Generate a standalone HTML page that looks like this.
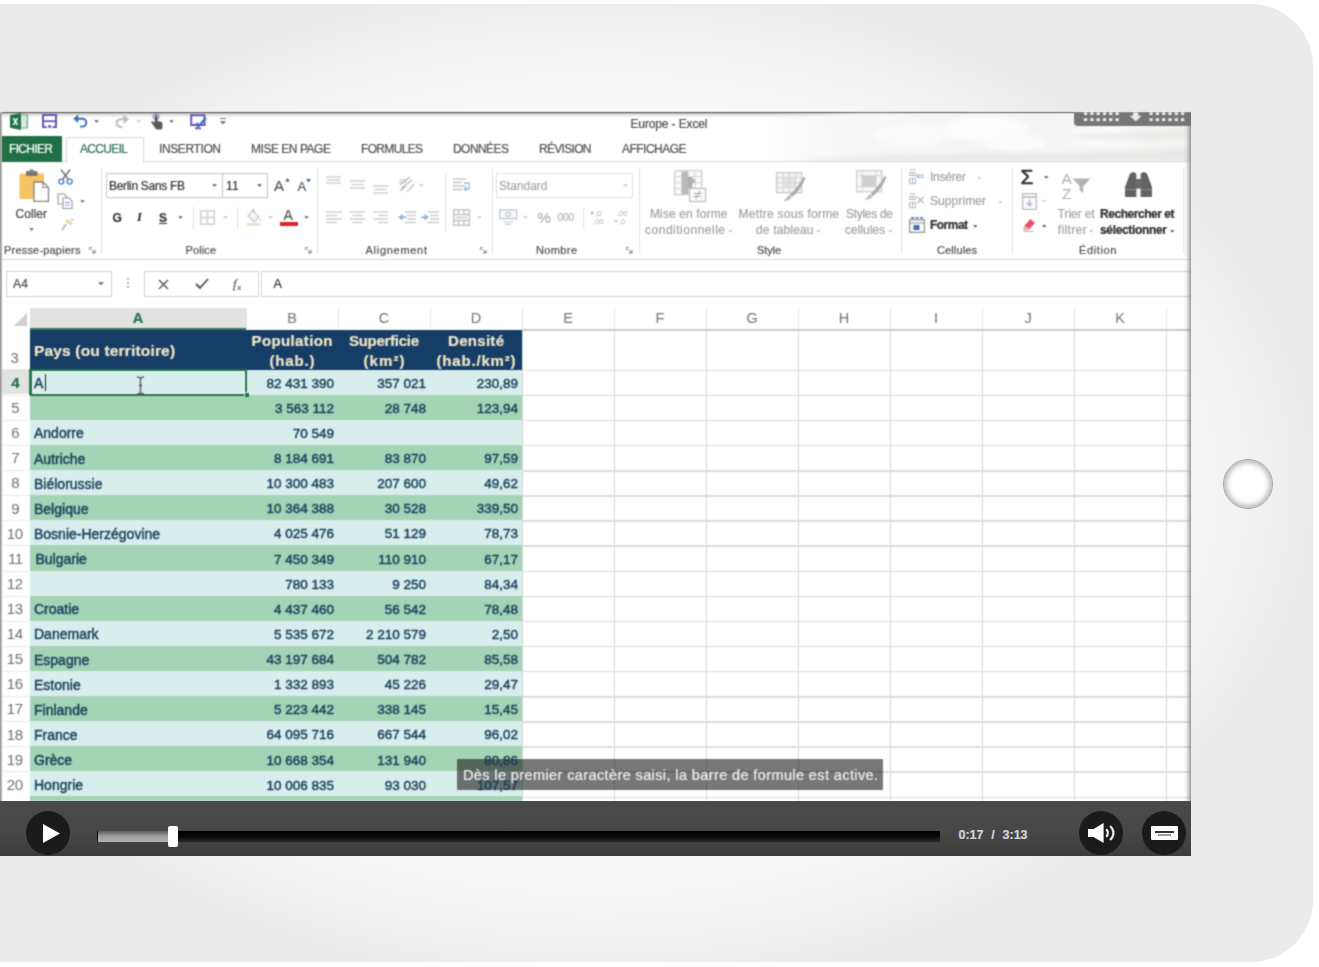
<!DOCTYPE html>
<html lang="fr">
<head>
<meta charset="utf-8">
<title>Europe - Excel</title>
<style>
*{box-sizing:border-box;margin:0;padding:0}
html,body{width:1319px;height:967px;overflow:hidden;background:#fff}
body{position:relative;font-family:"Liberation Sans",sans-serif;}
.abs{position:absolute}
/* tablet frame */
#frame{position:absolute;left:-80px;top:4px;width:1393px;height:957.6px;border-radius:0 62px 62px 0;
 background:
  radial-gradient(ellipse 720px 505px at 680px 480px,#fdfdfd 0%,#fbfbfb 52%,#f8f8f8 75%,#f1f1f1 91%,#ebebeb 100%);}
#home{position:absolute;left:1223px;top:459px;width:50px;height:50px;border-radius:50%;background:#fff;
 border:1px solid #a4a4a4;box-shadow:inset 0 0 6px 1.5px rgba(0,0,0,.36);}
/* video */
#video{position:absolute;left:0;top:111px;width:1191px;height:746px;overflow:hidden}
#excel{position:absolute;left:0;top:0;width:1191px;height:691px;background:#fff;overflow:hidden;color:#555}
#controls{position:absolute;left:0;top:690px;width:1191px;height:55.4px;background:linear-gradient(180deg,#4a4a4a 0%,#474747 55%,#3c3c3c 100%)}
.t{position:absolute;white-space:nowrap;display:block;-webkit-text-stroke:.2px currentColor}
.r{position:absolute;display:block}
#excel svg{overflow:visible}
#excel{filter:url(#soft)}
.c{-webkit-text-stroke:.45px currentColor}
</style>
</head>
<body>
<svg width="0" height="0" style="position:absolute"><defs><filter id="soft" x="0" y="0" width="100%" height="100%" color-interpolation-filters="sRGB"><feConvolveMatrix order="3" kernelMatrix="0.044 0.1216 0.044 0.1216 0.338 0.1216 0.044 0.1216 0.044" divisor="1" edgeMode="duplicate" preserveAlpha="true"/></filter></defs></svg>
<div id="frame"></div>
<div id="home"></div>
<div id="video">
<div id="excel">
<div class="r" style="left:0px;top:1px;width:1191px;height:1px;background:#454545;"></div>
<div class="r" style="left:0px;top:2px;width:1191px;height:4.5px;background:linear-gradient(180deg,rgba(0,0,0,.24),rgba(0,0,0,.08) 50%,rgba(0,0,0,0));"></div>
<svg class="r" style="left:760px;top:2px;" width="431" height="48" viewBox="0 0 431 48"><defs><linearGradient id="cl" x1="0" x2="1"><stop offset="0" stop-color="#f1f1f0" stop-opacity="0"/><stop offset=".3" stop-color="#f4f4f3" stop-opacity=".9"/><stop offset="1" stop-color="#f3f3f2"/></linearGradient><filter id="bl" x="-10%" y="-30%" width="120%" height="160%"><feGaussianBlur stdDeviation="2.2"/></filter></defs>
<rect x="0" y="0" width="431" height="48" fill="url(#cl)"/>
<g filter="url(#bl)"><ellipse cx="150" cy="22" rx="38" ry="12" fill="#fbfbfb"/><ellipse cx="225" cy="16" rx="42" ry="13" fill="#fdfdfd"/><ellipse cx="255" cy="30" rx="30" ry="9" fill="#fcfcfc"/><ellipse cx="345" cy="24" rx="40" ry="10" fill="#f9f9f9"/><ellipse cx="110" cy="8" rx="50" ry="6" fill="#f8f8f8"/>
<path d="M40 48C90 40 150 44 200 41C260 38 330 44 431 34V48Z" fill="#e9e9e7"/><path d="M300 24C340 18 380 22 431 14V24C390 29 340 27 300 24Z" fill="#ebebe9"/></g></svg>
<div class="r" style="left:1074px;top:1px;width:117px;height:14px;background:#767676;border-radius:0 0 0 4px;"></div>
<svg class="r" style="left:1074px;top:1px;" width="117" height="13" viewBox="0 0 117 13"><rect x="10.0" y="0.4" width="3.2" height="2.6" fill="#f4f4f4"/><rect x="10.0" y="6.3" width="3.2" height="2.8" fill="#f4f4f4"/><rect x="16.3" y="0.4" width="3.2" height="2.6" fill="#f4f4f4"/><rect x="16.3" y="6.3" width="3.2" height="2.8" fill="#f4f4f4"/><rect x="22.6" y="0.4" width="3.2" height="2.6" fill="#f4f4f4"/><rect x="22.6" y="6.3" width="3.2" height="2.8" fill="#f4f4f4"/><rect x="28.9" y="0.4" width="3.2" height="2.6" fill="#f4f4f4"/><rect x="28.9" y="6.3" width="3.2" height="2.8" fill="#f4f4f4"/><rect x="35.2" y="0.4" width="3.2" height="2.6" fill="#f4f4f4"/><rect x="35.2" y="6.3" width="3.2" height="2.8" fill="#f4f4f4"/><rect x="41.5" y="0.4" width="3.2" height="2.6" fill="#f4f4f4"/><rect x="41.5" y="6.3" width="3.2" height="2.8" fill="#f4f4f4"/><rect x="75.5" y="0.4" width="3.2" height="2.6" fill="#f4f4f4"/><rect x="75.5" y="6.3" width="3.2" height="2.8" fill="#f4f4f4"/><rect x="81.8" y="0.4" width="3.2" height="2.6" fill="#f4f4f4"/><rect x="81.8" y="6.3" width="3.2" height="2.8" fill="#f4f4f4"/><rect x="88.1" y="0.4" width="3.2" height="2.6" fill="#f4f4f4"/><rect x="88.1" y="6.3" width="3.2" height="2.8" fill="#f4f4f4"/><rect x="94.4" y="0.4" width="3.2" height="2.6" fill="#f4f4f4"/><rect x="94.4" y="6.3" width="3.2" height="2.8" fill="#f4f4f4"/><rect x="100.7" y="0.4" width="3.2" height="2.6" fill="#f4f4f4"/><rect x="100.7" y="6.3" width="3.2" height="2.8" fill="#f4f4f4"/><rect x="107.0" y="0.4" width="3.2" height="2.6" fill="#f4f4f4"/><rect x="107.0" y="6.3" width="3.2" height="2.8" fill="#f4f4f4"/><path d="M59 .5h5.4v3.2h3.4l-6.1 5.6-6.1-5.6h3.4z" fill="#ececec"/></svg>
<span class="t" style="left:630.5px;top:5.5px;font-size:12px;line-height:14px;letter-spacing:-0.13px;color:#4a4a4a;">Europe - Excel</span>
<svg class="r" style="left:10px;top:2px;" width="18" height="17" viewBox="0 0 18 17"><rect x="10.5" y="2" width="6.8" height="13" fill="#c9dad0" stroke="#3d8a62" stroke-width=".8"/><path d="M12.7 2.5V14.5M14.9 2.5V14.5" stroke="#eef4f0" stroke-width="1.1"/><path d="M0 2.2L10.8 0V17L0 14.8Z" fill="#1e7145"/><path d="M2.6 5L4.4 5 5.4 7.2 6.5 5 8.2 5 6.3 8.5 8.3 12 6.5 12 5.4 9.7 4.3 12 2.5 12 4.5 8.5Z" fill="#fff"/></svg>
<svg class="r" style="left:42px;top:3px;" width="15" height="14" viewBox="0 0 15 14"><path d="M1 1H14V13H1Z" fill="#fff" stroke="#6a52b5" stroke-width="2"/><path d="M1 7.2H14" stroke="#6a52b5" stroke-width="1.8"/><rect x="4.2" y="10" width="6.6" height="3.5" fill="#fff"/><rect x="6" y="11.2" width="3" height="2" fill="#6a52b5"/></svg>
<svg class="r" style="left:73px;top:3px;" width="15" height="14" viewBox="0 0 15 14"><path d="M2.5 4.8H9.4A3.9 3.9 0 0 1 9.4 12.6H7" fill="none" stroke="#2f6fbd" stroke-width="1.9"/><path d="M0.3 4.8L5.2 0.6V9Z" fill="#2f6fbd"/></svg>
<svg class="r" style="left:93.5px;top:8.75px;" width="5" height="3.0" viewBox="0 0 10 5"><path d="M0 0H10L5 5Z" fill="#666"/></svg>
<svg class="r" style="left:114px;top:3px;" width="15" height="14" viewBox="0 0 15 14"><path d="M13 5.2H5.8A4 4 0 0 0 5.8 13H8.5" fill="none" stroke="#bdbdbd" stroke-width="2"/><path d="M15 5.2L9.4 0.4V10Z" fill="#bdbdbd"/></svg>
<svg class="r" style="left:135.5px;top:8.75px;" width="5" height="3.0" viewBox="0 0 10 5"><path d="M0 0H10L5 5Z" fill="#c4c4c4"/></svg>
<svg class="r" style="left:150px;top:2px;" width="13" height="17" viewBox="0 0 13 17"><circle cx="6" cy="3.6" r="3" fill="none" stroke="#8a93c9" stroke-width="1.2"/><path d="M4.8 3V9.5L2.8 8.4C1.6 7.9.8 9.2 1.7 10.1L5.6 15.6C6 16.3 6.6 16.6 7.4 16.6H10.2C11.6 16.6 12.4 15.7 12.4 14.3V10.4C12.4 9 11 8.6 9.6 8.4L7.4 8V3C7.4 1.6 4.8 1.6 4.8 3Z" fill="#595959"/></svg>
<svg class="r" style="left:168.5px;top:8.75px;" width="5" height="3.0" viewBox="0 0 10 5"><path d="M0 0H10L5 5Z" fill="#666"/></svg>
<svg class="r" style="left:190px;top:3px;" width="17" height="15" viewBox="0 0 17 15"><path d="M1.2 1.2H14.5V11H1.2Z" fill="#fff" stroke="#6a52b5" stroke-width="2"/><path d="M5 14.4H11M8 11V14" stroke="#6a52b5" stroke-width="1.6"/><path d="M6.5 9L9 11.5L16 4" fill="none" stroke="#2f6fbd" stroke-width="2"/></svg>
<div class="r" style="left:219.5px;top:6.5px;width:6px;height:1.3px;background:#777;"></div>
<svg class="r" style="left:219.5px;top:10.0px;" width="6" height="3.5" viewBox="0 0 10 5"><path d="M0 0H10L5 5Z" fill="#666"/></svg>
<div class="r" style="left:0px;top:50px;width:1191px;height:1px;background:#dadada;"></div>
<div class="r" style="left:0px;top:25px;width:62px;height:26px;background:#1f7044;"></div>
<span class="t" style="left:9.0px;top:31.2px;font-size:12px;line-height:14px;letter-spacing:-0.67px;color:#fff;">FICHIER</span>
<div class="r" style="left:66px;top:26px;width:77.5px;height:25.5px;background:#fff;border:1px solid #d6d6d6;border-bottom:none;"></div>
<span class="t" style="left:80.0px;top:31.2px;font-size:12px;line-height:14px;letter-spacing:-0.67px;color:#2b6f55;">ACCUEIL</span>
<span class="t" style="left:159.0px;top:31.2px;font-size:12px;line-height:14px;letter-spacing:-0.39px;color:#4f4f4f;">INSERTION</span>
<span class="t" style="left:251.0px;top:31.2px;font-size:12px;line-height:14px;letter-spacing:-0.47px;color:#4f4f4f;">MISE EN PAGE</span>
<span class="t" style="left:361.0px;top:31.2px;font-size:12px;line-height:14px;letter-spacing:-0.67px;color:#4f4f4f;">FORMULES</span>
<span class="t" style="left:453.0px;top:31.2px;font-size:12px;line-height:14px;letter-spacing:-0.56px;color:#4f4f4f;">DONNÉES</span>
<span class="t" style="left:539.0px;top:31.2px;font-size:12px;line-height:14px;letter-spacing:-0.69px;color:#4f4f4f;">RÉVISION</span>
<span class="t" style="left:622.0px;top:31.2px;font-size:12px;line-height:14px;letter-spacing:-0.52px;color:#4f4f4f;">AFFICHAGE</span>
<div class="r" style="left:0px;top:148px;width:1191px;height:1px;background:#d9d9d9;"></div>
<div class="r" style="left:101px;top:57px;width:1px;height:86px;background:#e2e2e2;"></div>
<div class="r" style="left:317px;top:57px;width:1px;height:86px;background:#e2e2e2;"></div>
<div class="r" style="left:492px;top:57px;width:1px;height:86px;background:#e2e2e2;"></div>
<div class="r" style="left:638.5px;top:57px;width:1px;height:86px;background:#e2e2e2;"></div>
<div class="r" style="left:901px;top:57px;width:1px;height:86px;background:#e2e2e2;"></div>
<div class="r" style="left:1011.5px;top:57px;width:1px;height:86px;background:#e2e2e2;"></div>
<div class="r" style="left:1182.5px;top:57px;width:1px;height:86px;background:#e2e2e2;"></div>
<div class="r" style="left:445px;top:63px;width:1px;height:58px;background:#e2e2e2;"></div>
<svg class="r" style="left:19px;top:58px;" width="30" height="33" viewBox="0 0 30 33"><rect x=".5" y="4.5" width="24.5" height="25.5" rx="1.2" fill="#f5c264"/><rect x="7" y="2" width="11.5" height="5" rx="1.2" fill="#777"/><rect x="10.5" y=".3" width="4.5" height="3" rx="1.2" fill="#8d8d8d"/><path d="M15 13H24L29.5 18.5V32.3H15Z" fill="#fff" stroke="#858585" stroke-width="1.3"/><path d="M24 13V18.5H29.5" fill="none" stroke="#858585" stroke-width="1.2"/></svg>
<span class="t" style="left:15.5px;top:96.0px;font-size:12px;line-height:14px;letter-spacing:0.03px;color:#444;">Coller</span>
<svg class="r" style="left:28.5px;top:116.75px;" width="5" height="3.0" viewBox="0 0 10 5"><path d="M0 0H10L5 5Z" fill="#666"/></svg>
<svg class="r" style="left:58px;top:58px;" width="15" height="16" viewBox="0 0 15 16"><path d="M3 0.5L10.5 10.5M12 0.5L4.5 10.5" stroke="#6b6b6b" stroke-width="1.3"/><circle cx="3.3" cy="12.6" r="2.5" fill="none" stroke="#4a7fc1" stroke-width="1.4"/><circle cx="11.7" cy="12.6" r="2.5" fill="none" stroke="#4a7fc1" stroke-width="1.4"/></svg>
<svg class="r" style="left:57px;top:82px;" width="16" height="16" viewBox="0 0 16 16"><path d="M1 1H7L10 4V11H1Z" fill="#fff" stroke="#9a9a9a" stroke-width="1.1"/><path d="M6 5H12L15 8V15.5H6Z" fill="#fff" stroke="#9a9a9a" stroke-width="1.1"/><path d="M8 9.5H13M8 12H13" stroke="#7aa0d0" stroke-width="1"/></svg>
<svg class="r" style="left:79.5px;top:88.75px;" width="5" height="3.0" viewBox="0 0 10 5"><path d="M0 0H10L5 5Z" fill="#666"/></svg>
<svg class="r" style="left:59.5px;top:107px;" width="14" height="13" viewBox="0 0 14 13"><path d="M7.5 1L13 5L10.8 7.8L5.3 3.8Z" fill="#ecd6ac"/><path d="M6 6L2 12" stroke="#b9b9b9" stroke-width="1.8"/><path d="M11.5 1l1.6 1.2" stroke="#8ca9d6" stroke-width="1.3"/></svg>
<span class="t" style="left:4.0px;top:133.0px;font-size:11px;line-height:13px;letter-spacing:0.19px;color:#4e4e4e;">Presse-papiers</span>
<svg class="r" style="left:89px;top:135.5px;" width="7" height="7" viewBox="0 0 7 7"><path d="M0.5 3V0.5H3" fill="none" stroke="#8a8a8a" stroke-width="1"/><path d="M2.5 6.5H6.5V2.5Z" fill="#8a8a8a"/><path d="M2 2L5 5" stroke="#8a8a8a" stroke-width="1"/></svg>
<div class="r" style="left:106px;top:62px;width:162px;height:25px;background:#fff;border:1px solid #c6c6c6;"></div>
<div class="r" style="left:221.5px;top:62px;width:1px;height:25px;background:#c6c6c6;"></div>
<span class="t" style="left:109.0px;top:67.5px;font-size:12px;line-height:14px;letter-spacing:-0.31px;color:#333;">Berlin Sans FB</span>
<svg class="r" style="left:211.5px;top:73.25px;" width="5" height="3.0" viewBox="0 0 10 5"><path d="M0 0H10L5 5Z" fill="#555"/></svg>
<span class="t" style="left:226.0px;top:67.5px;font-size:12px;line-height:14px;letter-spacing:0.14px;color:#333;">11</span>
<svg class="r" style="left:256.5px;top:73.25px;" width="5" height="3.0" viewBox="0 0 10 5"><path d="M0 0H10L5 5Z" fill="#555"/></svg>
<span class="t" style="left:274.0px;top:66.0px;font-size:15px;line-height:18px;color:#555;">A</span>
<svg class="r" style="left:284.5px;top:67px;" width="5" height="3.5" viewBox="0 0 5 3.5"><path d="M0 3.5L2.5 0 5 3.5Z" fill="#3d6fb5"/></svg>
<span class="t" style="left:297.5px;top:68.0px;font-size:13px;line-height:16px;color:#555;">A</span>
<svg class="r" style="left:306px;top:67.5px;" width="5" height="3.5" viewBox="0 0 5 3.5"><path d="M0 0L2.5 3.5 5 0Z" fill="#3d6fb5"/></svg>
<span class="t" style="left:112.5px;top:99.5px;font-size:12px;line-height:14px;color:#333;font-weight:bold;">G</span>
<span class="t" style="left:137.0px;top:99.0px;font-size:12.5px;line-height:15px;color:#333;font-weight:bold;font-style:italic;font-family:'Liberation Serif',serif;">I</span>
<span class="t" style="left:159.0px;top:99.5px;font-size:12px;line-height:14px;color:#333;font-weight:bold;text-decoration:underline;">S</span>
<svg class="r" style="left:178.0px;top:105.25px;" width="5" height="3.0" viewBox="0 0 10 5"><path d="M0 0H10L5 5Z" fill="#666"/></svg>
<div class="r" style="left:192.5px;top:96px;width:1px;height:22px;background:#e0e0e0;"></div>
<svg class="r" style="left:200px;top:99px;" width="15" height="15" viewBox="0 0 15 15"><path d="M.75.75H14.25V14.25H.75ZM7.5.75V14.25M.75 7.5H14.25" fill="none" stroke="#cfcfcf" stroke-width="1.5"/></svg>
<svg class="r" style="left:222.5px;top:105.25px;" width="5" height="3.0" viewBox="0 0 10 5"><path d="M0 0H10L5 5Z" fill="#c4c4c4"/></svg>
<div class="r" style="left:237px;top:96px;width:1px;height:22px;background:#e0e0e0;"></div>
<svg class="r" style="left:246px;top:97px;" width="16" height="18" viewBox="0 0 16 18"><path d="M6.5 2.5L13 9L8 14L2 8Z" fill="#f4f4f4" stroke="#c2c2c2" stroke-width="1.1"/><path d="M6.5 2.5C6 .5 9 .5 8.6 4" fill="none" stroke="#c2c2c2" stroke-width="1"/><path d="M14 10.5c1 1.6 1.4 2.4.2 3-.9-.4-.9-1.4-.2-3z" fill="#c9c9c9"/><rect x="1" y="15.2" width="13.5" height="2.5" fill="#e6dfc8"/></svg>
<svg class="r" style="left:268.0px;top:105.25px;" width="5" height="3.0" viewBox="0 0 10 5"><path d="M0 0H10L5 5Z" fill="#c4c4c4"/></svg>
<span class="t" style="left:283.5px;top:95.5px;font-size:14px;line-height:17px;color:#555;">A</span>
<div class="r" style="left:280px;top:110.5px;width:17.5px;height:4px;background:#e0202a;"></div>
<svg class="r" style="left:303.5px;top:105.25px;" width="5" height="3.0" viewBox="0 0 10 5"><path d="M0 0H10L5 5Z" fill="#666"/></svg>
<span class="t" style="left:185.5px;top:133.0px;font-size:11px;line-height:13px;letter-spacing:0.11px;color:#4e4e4e;">Police</span>
<svg class="r" style="left:305px;top:135.5px;" width="7" height="7" viewBox="0 0 7 7"><path d="M0.5 3V0.5H3" fill="none" stroke="#8a8a8a" stroke-width="1"/><path d="M2.5 6.5H6.5V2.5Z" fill="#8a8a8a"/><path d="M2 2L5 5" stroke="#8a8a8a" stroke-width="1"/></svg>
<svg class="r" style="left:326px;top:63px;" width="16" height="16" viewBox="0 0 16 16"><path d="M0 3H15" stroke="#cdcdcd" stroke-width="1.4"/><path d="M1 6H14" stroke="#cdcdcd" stroke-width="1.4"/><path d="M0 9H15" stroke="#cdcdcd" stroke-width="1.4"/></svg>
<svg class="r" style="left:350px;top:67px;" width="16" height="16" viewBox="0 0 16 16"><path d="M0 3H15" stroke="#cdcdcd" stroke-width="1.4"/><path d="M1.5 6.5H13.5" stroke="#cdcdcd" stroke-width="1.4"/><path d="M0 10H15" stroke="#cdcdcd" stroke-width="1.4"/></svg>
<svg class="r" style="left:372.5px;top:72px;" width="16" height="16" viewBox="0 0 16 16"><path d="M0 3H15" stroke="#cdcdcd" stroke-width="1.4"/><path d="M1.5 6.5H13.5" stroke="#cdcdcd" stroke-width="1.4"/><path d="M0 10H15" stroke="#cdcdcd" stroke-width="1.4"/></svg>
<svg class="r" style="left:397.5px;top:65px;" width="18" height="17" viewBox="0 0 18 17"><path d="M2 9L12 1M3.5 12L14 4M2 15L8 10" stroke="#bdbdbd" stroke-width="1.3"/><path d="M9 16L16 8" stroke="#c8c8c8" stroke-width="1.6"/><text x="1" y="7" font-size="7" fill="#bdbdbd" font-family="Liberation Sans, sans-serif">ab</text></svg>
<svg class="r" style="left:418.5px;top:73.25px;" width="5" height="3.0" viewBox="0 0 10 5"><path d="M0 0H10L5 5Z" fill="#c9c9c9"/></svg>
<svg class="r" style="left:326px;top:99px;" width="16" height="16" viewBox="0 0 16 16"><path d="M0 2H16" stroke="#cdcdcd" stroke-width="1.4"/><path d="M0 5.5H11" stroke="#cdcdcd" stroke-width="1.4"/><path d="M0 9H16" stroke="#cdcdcd" stroke-width="1.4"/><path d="M0 12.5H11" stroke="#cdcdcd" stroke-width="1.4"/></svg>
<svg class="r" style="left:350px;top:99px;" width="16" height="16" viewBox="0 0 16 16"><path d="M0 2H15" stroke="#cdcdcd" stroke-width="1.4"/><path d="M2.5 5.5H12.5" stroke="#cdcdcd" stroke-width="1.4"/><path d="M0 9H15" stroke="#cdcdcd" stroke-width="1.4"/><path d="M2.5 12.5H12.5" stroke="#cdcdcd" stroke-width="1.4"/></svg>
<svg class="r" style="left:372.5px;top:99px;" width="16" height="16" viewBox="0 0 16 16"><path d="M0 2H15" stroke="#cdcdcd" stroke-width="1.4"/><path d="M5 5.5H15" stroke="#cdcdcd" stroke-width="1.4"/><path d="M0 9H15" stroke="#cdcdcd" stroke-width="1.4"/><path d="M5 12.5H15" stroke="#cdcdcd" stroke-width="1.4"/></svg>
<svg class="r" style="left:397.5px;top:99px;" width="18" height="15" viewBox="0 0 18 15"><path d="M7 2H18M9 5.5H18M9 9H18M7 12.5H18" stroke="#cdcdcd" stroke-width="1.4"/><path d="M0 7.2L4.5 4V10.4Z" fill="#8fb0d8"/><path d="M4 7.2H8" stroke="#8fb0d8" stroke-width="1.6"/></svg>
<svg class="r" style="left:421px;top:99px;" width="18" height="15" viewBox="0 0 18 15"><path d="M7 2H18M9 5.5H18M9 9H18M7 12.5H18" stroke="#cdcdcd" stroke-width="1.4"/><path d="M8 7.2L3.5 4V10.4Z" fill="#8fb0d8"/><path d="M0 7.2H4" stroke="#8fb0d8" stroke-width="1.6"/></svg>
<svg class="r" style="left:452.5px;top:66px;" width="18" height="17" viewBox="0 0 18 17"><path d="M0 2H13M0 5.5H9M0 9H13M0 12.5H9" stroke="#c6c6c6" stroke-width="1.4"/><path d="M11 6H16V12H12" fill="none" stroke="#9dbbe0" stroke-width="1.3"/><path d="M10 12L13.5 9.5V14.5Z" fill="#9dbbe0"/></svg>
<svg class="r" style="left:452.5px;top:98px;" width="17" height="17" viewBox="0 0 17 17"><path d="M.75.75H16.25V16.25H.75ZM.75 5.5H16.25M.75 11.5H16.25M5.5 11.5V16.25M11 11.5V16.25M5.5 .75V5.5M11 .75V5.5" fill="none" stroke="#c4c4c4" stroke-width="1.4"/><path d="M3 8.5H14" stroke="#b5c8e3" stroke-width="1.4"/></svg>
<svg class="r" style="left:476.5px;top:105.25px;" width="5" height="3.0" viewBox="0 0 10 5"><path d="M0 0H10L5 5Z" fill="#c9c9c9"/></svg>
<span class="t" style="left:365.5px;top:133.0px;font-size:11px;line-height:13px;letter-spacing:0.72px;color:#4e4e4e;">Alignement</span>
<svg class="r" style="left:480px;top:135.5px;" width="7" height="7" viewBox="0 0 7 7"><path d="M0.5 3V0.5H3" fill="none" stroke="#8a8a8a" stroke-width="1"/><path d="M2.5 6.5H6.5V2.5Z" fill="#8a8a8a"/><path d="M2 2L5 5" stroke="#8a8a8a" stroke-width="1"/></svg>
<div class="r" style="left:496px;top:62px;width:137px;height:25px;background:#fff;border:1px solid #e4e4e4;"></div>
<span class="t" style="left:499.0px;top:67.5px;font-size:12px;line-height:14px;letter-spacing:-0.03px;color:#a8a8a8;">Standard</span>
<svg class="r" style="left:622.5px;top:73.25px;" width="5" height="3.0" viewBox="0 0 10 5"><path d="M0 0H10L5 5Z" fill="#c4c4c4"/></svg>
<svg class="r" style="left:499px;top:98px;" width="19" height="16" viewBox="0 0 19 16"><rect x=".7" y=".7" width="17" height="9" fill="#f4f6fa" stroke="#b9c6da" stroke-width="1.2"/><circle cx="9.2" cy="5.2" r="2.3" fill="none" stroke="#b5b5b5"/><path d="M4 13H14M6 15.3H12" stroke="#c9c9c9" stroke-width="1.2"/></svg>
<svg class="r" style="left:522.5px;top:105.25px;" width="5" height="3.0" viewBox="0 0 10 5"><path d="M0 0H10L5 5Z" fill="#c9c9c9"/></svg>
<span class="t" style="left:537.5px;top:97.5px;font-size:15px;line-height:18px;color:#b0b0b0;">%</span>
<span class="t" style="left:557.5px;top:101.0px;font-size:10px;line-height:12px;letter-spacing:-0.09px;color:#b0b0b0;">000</span>
<div class="r" style="left:582.5px;top:96px;width:1px;height:22px;background:#e0e0e0;"></div>
<svg class="r" style="left:590px;top:98px;" width="17" height="17" viewBox="0 0 17 17"><text x="5" y="7" font-size="7.5" fill="#b3b3b3" font-family="Liberation Sans, sans-serif">,0</text><text x="3" y="15" font-size="7.5" fill="#b3b3b3" font-family="Liberation Sans, sans-serif">,00</text><path d="M0 4H4M2 2V6" stroke="#9dbbe0" stroke-width="1.1"/></svg>
<svg class="r" style="left:614px;top:98px;" width="17" height="17" viewBox="0 0 17 17"><text x="3" y="7" font-size="7.5" fill="#b3b3b3" font-family="Liberation Sans, sans-serif">,00</text><text x="5" y="15" font-size="7.5" fill="#b3b3b3" font-family="Liberation Sans, sans-serif">,0</text><path d="M0 12H4" stroke="#9dbbe0" stroke-width="1.1"/></svg>
<span class="t" style="left:536.0px;top:133.0px;font-size:11px;line-height:13px;letter-spacing:0.38px;color:#4e4e4e;">Nombre</span>
<svg class="r" style="left:626px;top:135.5px;" width="7" height="7" viewBox="0 0 7 7"><path d="M0.5 3V0.5H3" fill="none" stroke="#8a8a8a" stroke-width="1"/><path d="M2.5 6.5H6.5V2.5Z" fill="#8a8a8a"/><path d="M2 2L5 5" stroke="#8a8a8a" stroke-width="1"/></svg>
<svg class="r" style="left:674px;top:59px;" width="32" height="32" viewBox="0 0 32 32"><rect x=".7" y=".7" width="27" height="24" fill="#fafafa" stroke="#c9c9c9" stroke-width="1.2"/>
<path d="M.7 6.7H27.7M.7 12.7H27.7M.7 18.7H27.7M7.5 .7V24.7M14.2 .7V24.7M21 .7V24.7" stroke="#d4d4d4" stroke-width="1"/>
<rect x="8" y="1.5" width="6" height="22.5" fill="#b9b9b9"/><rect x="14" y="7" width="4.5" height="11.5" fill="#adadad"/><rect x="18" y="9" width="3" height="4" fill="#b5b5b5"/>
<rect x="15.5" y="18.5" width="16" height="13" fill="#fbfbfb" stroke="#bdbdbd" stroke-width="1.2"/><path d="M20 23.5H27.5M20 26.5H27.5M26 21L21.5 29" stroke="#ababab" stroke-width="1.1"/></svg>
<span class="t" style="left:650.0px;top:95.6px;font-size:12px;line-height:14px;letter-spacing:0.12px;color:#a2a2a2;">Mise en forme</span>
<span class="t" style="left:645.0px;top:112.2px;font-size:12px;line-height:14px;letter-spacing:0.51px;color:#a2a2a2;">conditionnelle</span>
<svg class="r" style="left:727.75px;top:118.875px;" width="4.5" height="2.75" viewBox="0 0 10 5"><path d="M0 0H10L5 5Z" fill="#c0c0c0"/></svg>
<svg class="r" style="left:776px;top:61px;" width="30" height="30" viewBox="0 0 30 30"><rect x=".7" y=".7" width="25" height="20" fill="#f4f4f4" stroke="#c6c6c6" stroke-width="1.2"/>
<path d="M.7 5.7H25.7M.7 10.7H25.7M.7 15.7H25.7M7 .7V20.7M13.2 .7V20.7M19.5 .7V20.7" stroke="#d0d0d0" stroke-width="1"/><rect x="7" y="5.7" width="12.5" height="10" fill="#dcdcdc" opacity=".7"/>
<path d="M29.5 6C27 13 22 20 16 25L13.5 23C19 18 24 12 27.5 5Z" fill="#a9a9a9"/><path d="M15.5 25.5C13 28.5 10 29 7 28.5C9.5 27.5 11 25.5 12.5 23Z" fill="#b3bdd0"/></svg>
<span class="t" style="left:738.5px;top:95.6px;font-size:12px;line-height:14px;letter-spacing:0.24px;color:#a2a2a2;">Mettre sous forme</span>
<span class="t" style="left:756.0px;top:112.2px;font-size:12px;line-height:14px;letter-spacing:0.16px;color:#a2a2a2;">de tableau</span>
<svg class="r" style="left:815.75px;top:118.875px;" width="4.5" height="2.75" viewBox="0 0 10 5"><path d="M0 0H10L5 5Z" fill="#c0c0c0"/></svg>
<svg class="r" style="left:856px;top:59px;" width="31" height="30" viewBox="0 0 31 30"><rect x=".7" y=".7" width="25" height="21" fill="#f7f7f7" stroke="#cbcbcb" stroke-width="1.2"/>
<path d="M.7 5.7H25.7M.7 16.7H25.7M6 .7V21.7M20 .7V21.7" stroke="#d4d4d4" stroke-width="1"/><rect x="6" y="5.7" width="14" height="11" fill="#cfcfcf"/>
<path d="M30.5 7C28 14 23 21 17 26L14.5 24C20 19 25 13 28.5 6Z" fill="#a9a9a9"/><path d="M16.5 26.5C14 29.5 11 30 8 29.5C10.5 28.5 12 26.5 13.5 24Z" fill="#b3bdd0"/></svg>
<span class="t" style="left:846.0px;top:95.6px;font-size:12px;line-height:14px;letter-spacing:-0.29px;color:#a2a2a2;">Styles de</span>
<span class="t" style="left:845.0px;top:112.2px;font-size:12px;line-height:14px;color:#a2a2a2;">cellules</span>
<svg class="r" style="left:888.25px;top:118.875px;" width="4.5" height="2.75" viewBox="0 0 10 5"><path d="M0 0H10L5 5Z" fill="#c0c0c0"/></svg>
<span class="t" style="left:757.0px;top:133.0px;font-size:11px;line-height:13px;letter-spacing:-0.11px;color:#4e4e4e;">Style</span>
<svg class="r" style="left:909px;top:58px;" width="16" height="15" viewBox="0 0 16 15"><path d="M.6 3.6H6.6V6.6H.6ZM.6 9.6H6.6V14.6H.6ZM3.6 9.6V14.6M3.6 3.6V6.6" fill="#fbfbfb" stroke="#b9b9b9" stroke-width="1"/><path d="M1 .8H6.5" stroke="#c4c4c4" stroke-width="1.2"/><path d="M8 6.2H15M8 8.4H15" stroke="#a9c3e6" stroke-width="1.3"/><path d="M6.5 7.3L9.5 5V9.6Z" fill="#a9c3e6"/></svg>
<span class="t" style="left:930.0px;top:59.4px;font-size:12px;line-height:14px;letter-spacing:-0.22px;color:#a2a2a2;">Insérer</span>
<svg class="r" style="left:977.15px;top:65.875px;" width="4.5" height="2.75" viewBox="0 0 10 5"><path d="M0 0H10L5 5Z" fill="#c9c9c9"/></svg>
<svg class="r" style="left:909px;top:81.5px;" width="16" height="15" viewBox="0 0 16 15"><path d="M.6 3.6H6.6V6.6H.6ZM.6 9.6H6.6V14.6H.6ZM3.6 9.6V14.6M3.6 3.6V6.6" fill="#fbfbfb" stroke="#b9b9b9" stroke-width="1"/><path d="M1 .8H6.5" stroke="#c4c4c4" stroke-width="1.2"/><path d="M8.5 4L14.5 10M14.5 4L8.5 10" stroke="#c9b0b0" stroke-width="1.3"/></svg>
<span class="t" style="left:930.0px;top:83.4px;font-size:12px;line-height:14px;letter-spacing:0.08px;color:#a2a2a2;">Supprimer</span>
<svg class="r" style="left:997.75px;top:89.875px;" width="4.5" height="2.75" viewBox="0 0 10 5"><path d="M0 0H10L5 5Z" fill="#c9c9c9"/></svg>
<svg class="r" style="left:909px;top:106px;" width="16" height="16" viewBox="0 0 16 16"><rect x=".7" y="2.7" width="14.6" height="12.6" fill="#fdfdfd" stroke="#8d8d8d" stroke-width="1.2"/><path d="M.7 6H15.3" stroke="#8d8d8d" stroke-width="1"/><path d="M2 .8H5M6.5 .8H9.5M11 .8H14" stroke="#4f79b8" stroke-width="1.4"/><rect x="4.5" y="8" width="6" height="5" fill="#3f6fb3"/></svg>
<span class="t" style="left:930.0px;top:107.3px;font-size:12px;line-height:14px;letter-spacing:-0.53px;color:#2e2e2e;font-weight:bold;">Format</span>
<svg class="r" style="left:972.75px;top:113.875px;" width="4.5" height="2.75" viewBox="0 0 10 5"><path d="M0 0H10L5 5Z" fill="#444"/></svg>
<span class="t" style="left:937.0px;top:133.0px;font-size:11px;line-height:13px;letter-spacing:0.12px;color:#4e4e4e;">Cellules</span>
<span class="t" style="left:1020.5px;top:52.5px;font-size:21px;line-height:25px;color:#2b2b2b;-webkit-text-stroke:.5px #2b2b2b;">Σ</span>
<svg class="r" style="left:1043.55px;top:64.875px;" width="4.5" height="2.75" viewBox="0 0 10 5"><path d="M0 0H10L5 5Z" fill="#444"/></svg>
<svg class="r" style="left:1022px;top:81.5px;" width="15" height="17" viewBox="0 0 15 17"><rect x=".7" y=".7" width="13.6" height="15.6" fill="#fcfcfc" stroke="#b8b8b8" stroke-width="1.2"/><path d="M.7 4H14.3" stroke="#b8b8b8" stroke-width="1.6"/><path d="M7.5 6.5V12" stroke="#a9b9d4" stroke-width="1.6"/><path d="M4.2 10L7.5 14L10.8 10Z" fill="#a9b9d4"/></svg>
<svg class="r" style="left:1041.75px;top:89.375px;" width="4.5" height="2.75" viewBox="0 0 10 5"><path d="M0 0H10L5 5Z" fill="#c9c9c9"/></svg>
<svg class="r" style="left:1022px;top:107px;" width="14" height="14" viewBox="0 0 14 14"><path d="M8.5 1L13 5L7 11.5L2.5 7.5Z" fill="#e8536a"/><path d="M2.5 7.5L7 11.5L5.8 12.6H2.8L1 10.5Z" fill="#f3aab3"/><path d="M1 13.4H12" stroke="#d9a0a8" stroke-width="1"/></svg>
<svg class="r" style="left:1041.75px;top:113.875px;" width="4.5" height="2.75" viewBox="0 0 10 5"><path d="M0 0H10L5 5Z" fill="#444"/></svg>
<svg class="r" style="left:1060px;top:60px;" width="31" height="29" viewBox="0 0 31 29"><text x="1.5" y="12.5" font-size="15.5" fill="#b0b0b0" font-family="Liberation Sans, sans-serif">A</text><text x="2" y="27.5" font-size="15.5" fill="#b0b0b0" font-family="Liberation Sans, sans-serif">Z</text><path d="M12.5 7.5H30.5L23.3 15.2V22L19.7 19.5V15.2Z" fill="#b3b3b3"/></svg>
<span class="t" style="left:1057.7px;top:95.7px;font-size:12px;line-height:14px;letter-spacing:-0.08px;color:#a2a2a2;">Trier et</span>
<span class="t" style="left:1057.7px;top:112.3px;font-size:12px;line-height:14px;letter-spacing:0.39px;color:#a2a2a2;">filtrer</span>
<svg class="r" style="left:1089.45px;top:118.875px;" width="4.5" height="2.75" viewBox="0 0 10 5"><path d="M0 0H10L5 5Z" fill="#c0c0c0"/></svg>
<svg class="r" style="left:1123.5px;top:61px;" width="29" height="25" viewBox="0 0 29 25"><path d="M1 25V15L5.5 3C6 0.8 8.2 0.3 9.5 0.3C11.2 0.3 12.4 1.5 12.4 3V25Z" fill="#626262"/><path d="M28 25V15L23.5 3C23 0.8 20.8 0.3 19.5 0.3C17.8 0.3 16.6 1.5 16.6 3V25Z" fill="#626262"/><rect x="11.5" y="7" width="6" height="9.5" fill="#6a6a6a"/><rect x="1" y="17" width="11.4" height="1.2" fill="#8a8a8a"/><rect x="16.6" y="17" width="11.4" height="1.2" fill="#8a8a8a"/></svg>
<span class="t" style="left:1100.0px;top:95.7px;font-size:12px;line-height:14px;letter-spacing:-0.46px;color:#2e2e2e;font-weight:bold;">Rechercher et</span>
<span class="t" style="left:1100.0px;top:112.3px;font-size:12px;line-height:14px;letter-spacing:-0.34px;color:#2e2e2e;font-weight:bold;">sélectionner</span>
<svg class="r" style="left:1169.75px;top:118.875px;" width="4.5" height="2.75" viewBox="0 0 10 5"><path d="M0 0H10L5 5Z" fill="#444"/></svg>
<span class="t" style="left:1079.0px;top:133.0px;font-size:11px;line-height:13px;letter-spacing:0.64px;color:#4e4e4e;">Édition</span>
<div class="r" style="left:6px;top:159.5px;width:105.5px;height:26.5px;background:#fff;border:1px solid #d2d2d2;"></div>
<span class="t" style="left:13.0px;top:166.0px;font-size:12px;line-height:14px;letter-spacing:0.32px;color:#444;">A4</span>
<svg class="r" style="left:98.0px;top:171.0px;" width="6" height="3.5" viewBox="0 0 10 5"><path d="M0 0H10L5 5Z" fill="#666"/></svg>
<div class="r" style="left:127px;top:167px;width:1.5px;height:1.5px;background:#b5b5b5;"></div>
<div class="r" style="left:127px;top:171px;width:1.5px;height:1.5px;background:#b5b5b5;"></div>
<div class="r" style="left:127px;top:175px;width:1.5px;height:1.5px;background:#b5b5b5;"></div>
<div class="r" style="left:144px;top:159.5px;width:114.5px;height:26.5px;background:#fff;border:1px solid #d2d2d2;"></div>
<svg class="r" style="left:158px;top:167.5px;" width="11" height="11" viewBox="0 0 11 11"><path d="M1 1L10 10M10 1L1 10" stroke="#5a5a5a" stroke-width="1.5"/></svg>
<svg class="r" style="left:195px;top:167px;" width="14" height="11" viewBox="0 0 14 11"><path d="M1 6L5 10L13 1" fill="none" stroke="#4a4a4a" stroke-width="1.8"/></svg>
<span class="t" style="left:233.0px;top:164.5px;font-size:13px;line-height:16px;color:#555;font-style:italic;font-family:'Liberation Serif',serif;">f<span style="font-size:9px;position:relative;top:2.5px;left:.5px">x</span></span>
<div class="r" style="left:261px;top:159.5px;width:940px;height:26.5px;background:#fff;border:1px solid #d2d2d2;"></div>
<span class="t" style="left:273.5px;top:166.0px;font-size:12.5px;line-height:15px;color:#333;">A</span>
<div class="r" style="left:30px;top:197px;width:216px;height:21px;background:#e2e2e2;"></div>
<div class="r" style="left:30px;top:216.5px;width:216px;height:2px;background:#2f7a55;"></div>
<svg class="r" style="left:14px;top:202px;" width="13" height="13" viewBox="0 0 13 13"><path d="M13 0V13H0Z" fill="#d0d0d0"/></svg>
<span class="t" style="left:132.8px;top:199.0px;font-size:14.5px;line-height:17px;color:#1f6e47;font-weight:bold;">A</span>
<span class="t" style="left:287.2px;top:199.0px;font-size:14.5px;line-height:17px;color:#727272;-webkit-text-stroke:0;">B</span>
<span class="t" style="left:378.8px;top:199.0px;font-size:14.5px;line-height:17px;color:#727272;-webkit-text-stroke:0;">C</span>
<span class="t" style="left:470.8px;top:199.0px;font-size:14.5px;line-height:17px;color:#727272;-webkit-text-stroke:0;">D</span>
<span class="t" style="left:563.2px;top:199.0px;font-size:14.5px;line-height:17px;color:#727272;-webkit-text-stroke:0;">E</span>
<span class="t" style="left:655.6px;top:199.0px;font-size:14.5px;line-height:17px;color:#727272;-webkit-text-stroke:0;">F</span>
<span class="t" style="left:746.4px;top:199.0px;font-size:14.5px;line-height:17px;color:#727272;-webkit-text-stroke:0;">G</span>
<span class="t" style="left:838.8px;top:199.0px;font-size:14.5px;line-height:17px;color:#727272;-webkit-text-stroke:0;">H</span>
<span class="t" style="left:934.0px;top:199.0px;font-size:14.5px;line-height:17px;color:#727272;-webkit-text-stroke:0;">I</span>
<span class="t" style="left:1024.4px;top:199.0px;font-size:14.5px;line-height:17px;color:#727272;-webkit-text-stroke:0;">J</span>
<span class="t" style="left:1115.2px;top:199.0px;font-size:14.5px;line-height:17px;color:#727272;-webkit-text-stroke:0;">K</span>
<div class="r" style="left:246px;top:198px;width:1px;height:20px;background:#e3e3e3;"></div>
<div class="r" style="left:338px;top:198px;width:1px;height:20px;background:#e3e3e3;"></div>
<div class="r" style="left:430px;top:198px;width:1px;height:20px;background:#e3e3e3;"></div>
<div class="r" style="left:522px;top:198px;width:1px;height:20px;background:#e3e3e3;"></div>
<div class="r" style="left:614px;top:198px;width:1px;height:20px;background:#e3e3e3;"></div>
<div class="r" style="left:706px;top:198px;width:1px;height:20px;background:#e3e3e3;"></div>
<div class="r" style="left:798px;top:198px;width:1px;height:20px;background:#e3e3e3;"></div>
<div class="r" style="left:890px;top:198px;width:1px;height:20px;background:#e3e3e3;"></div>
<div class="r" style="left:982px;top:198px;width:1px;height:20px;background:#e3e3e3;"></div>
<div class="r" style="left:1074px;top:198px;width:1px;height:20px;background:#e3e3e3;"></div>
<div class="r" style="left:1166px;top:198px;width:1px;height:20px;background:#e3e3e3;"></div>
<div class="r" style="left:522px;top:218px;width:669px;height:1.5px;background:#c8c8c8;"></div>
<div class="r" style="left:521.9px;top:219px;width:1.2px;height:472px;background:#d6d6d6;"></div>
<div class="r" style="left:613.9px;top:219px;width:1.2px;height:472px;background:#d6d6d6;"></div>
<div class="r" style="left:705.9px;top:219px;width:1.2px;height:472px;background:#d6d6d6;"></div>
<div class="r" style="left:797.9px;top:219px;width:1.2px;height:472px;background:#d6d6d6;"></div>
<div class="r" style="left:889.9px;top:219px;width:1.2px;height:472px;background:#d6d6d6;"></div>
<div class="r" style="left:981.9px;top:219px;width:1.2px;height:472px;background:#d6d6d6;"></div>
<div class="r" style="left:1073.9px;top:219px;width:1.2px;height:472px;background:#d6d6d6;"></div>
<div class="r" style="left:1165.9px;top:219px;width:1.2px;height:472px;background:#d6d6d6;"></div>
<div class="r" style="left:522px;top:258.9px;width:669px;height:1.3px;background:#dcdcdc;"></div>
<div class="r" style="left:522px;top:283.9px;width:669px;height:1.3px;background:#dcdcdc;"></div>
<div class="r" style="left:522px;top:308.9px;width:669px;height:1.3px;background:#dcdcdc;"></div>
<div class="r" style="left:522px;top:333.9px;width:669px;height:1.3px;background:#dcdcdc;"></div>
<div class="r" style="left:522px;top:359.4px;width:669px;height:1.3px;background:#dcdcdc;"></div>
<div class="r" style="left:522px;top:384.4px;width:669px;height:1.3px;background:#dcdcdc;"></div>
<div class="r" style="left:522px;top:409.4px;width:669px;height:1.3px;background:#dcdcdc;"></div>
<div class="r" style="left:522px;top:434.4px;width:669px;height:1.3px;background:#dcdcdc;"></div>
<div class="r" style="left:522px;top:459.9px;width:669px;height:1.3px;background:#dcdcdc;"></div>
<div class="r" style="left:522px;top:484.9px;width:669px;height:1.3px;background:#dcdcdc;"></div>
<div class="r" style="left:522px;top:509.9px;width:669px;height:1.3px;background:#dcdcdc;"></div>
<div class="r" style="left:522px;top:534.9px;width:669px;height:1.3px;background:#dcdcdc;"></div>
<div class="r" style="left:522px;top:559.9px;width:669px;height:1.3px;background:#dcdcdc;"></div>
<div class="r" style="left:522px;top:585.4px;width:669px;height:1.3px;background:#dcdcdc;"></div>
<div class="r" style="left:522px;top:610.4px;width:669px;height:1.3px;background:#dcdcdc;"></div>
<div class="r" style="left:522px;top:635.4px;width:669px;height:1.3px;background:#dcdcdc;"></div>
<div class="r" style="left:522px;top:660.4px;width:669px;height:1.3px;background:#dcdcdc;"></div>
<div class="r" style="left:522px;top:685.9px;width:669px;height:1.3px;background:#dcdcdc;"></div>
<div class="r" style="left:29.5px;top:219px;width:1px;height:472px;background:#e0e0e0;"></div>
<div class="r" style="left:2px;top:258.3px;width:28px;height:25.12px;background:#e2e2e2;"></div>
<div class="r" style="left:28.5px;top:258.3px;width:2px;height:26.12px;background:#2f7a55;"></div>
<span class="t" style="left:10.5px;top:237.5px;font-size:15px;line-height:18px;color:#707070;-webkit-text-stroke:0;">3</span>
<span class="t" style="left:11.2px;top:262.9px;font-size:15px;line-height:18px;color:#1f6e47;font-weight:bold;">4</span>
<span class="t" style="left:11.2px;top:288.0px;font-size:15px;line-height:18px;color:#707070;-webkit-text-stroke:0;">5</span>
<div class="r" style="left:2px;top:283.5px;width:28px;height:1px;background:#ececec;"></div>
<span class="t" style="left:11.2px;top:313.1px;font-size:15px;line-height:18px;color:#707070;-webkit-text-stroke:0;">6</span>
<div class="r" style="left:2px;top:308.5px;width:28px;height:1px;background:#ececec;"></div>
<span class="t" style="left:11.2px;top:338.2px;font-size:15px;line-height:18px;color:#707070;-webkit-text-stroke:0;">7</span>
<div class="r" style="left:2px;top:333.5px;width:28px;height:1px;background:#ececec;"></div>
<span class="t" style="left:11.2px;top:363.3px;font-size:15px;line-height:18px;color:#707070;-webkit-text-stroke:0;">8</span>
<div class="r" style="left:2px;top:359.0px;width:28px;height:1px;background:#ececec;"></div>
<span class="t" style="left:11.2px;top:388.5px;font-size:15px;line-height:18px;color:#707070;-webkit-text-stroke:0;">9</span>
<div class="r" style="left:2px;top:384.0px;width:28px;height:1px;background:#ececec;"></div>
<span class="t" style="left:6.8px;top:413.6px;font-size:15px;line-height:18px;color:#707070;letter-spacing:-0.3px;-webkit-text-stroke:0;">10</span>
<div class="r" style="left:2px;top:409.0px;width:28px;height:1px;background:#ececec;"></div>
<span class="t" style="left:7.9px;top:438.7px;font-size:15px;line-height:18px;color:#707070;letter-spacing:-0.3px;-webkit-text-stroke:0;">11</span>
<div class="r" style="left:2px;top:434.0px;width:28px;height:1px;background:#ececec;"></div>
<span class="t" style="left:6.8px;top:463.8px;font-size:15px;line-height:18px;color:#707070;letter-spacing:-0.3px;-webkit-text-stroke:0;">12</span>
<div class="r" style="left:2px;top:459.5px;width:28px;height:1px;background:#ececec;"></div>
<span class="t" style="left:6.8px;top:488.9px;font-size:15px;line-height:18px;color:#707070;letter-spacing:-0.3px;-webkit-text-stroke:0;">13</span>
<div class="r" style="left:2px;top:484.5px;width:28px;height:1px;background:#ececec;"></div>
<span class="t" style="left:6.8px;top:514.1px;font-size:15px;line-height:18px;color:#707070;letter-spacing:-0.3px;-webkit-text-stroke:0;">14</span>
<div class="r" style="left:2px;top:509.5px;width:28px;height:1px;background:#ececec;"></div>
<span class="t" style="left:6.8px;top:539.2px;font-size:15px;line-height:18px;color:#707070;letter-spacing:-0.3px;-webkit-text-stroke:0;">15</span>
<div class="r" style="left:2px;top:534.5px;width:28px;height:1px;background:#ececec;"></div>
<span class="t" style="left:6.8px;top:564.3px;font-size:15px;line-height:18px;color:#707070;letter-spacing:-0.3px;-webkit-text-stroke:0;">16</span>
<div class="r" style="left:2px;top:559.5px;width:28px;height:1px;background:#ececec;"></div>
<span class="t" style="left:6.8px;top:589.4px;font-size:15px;line-height:18px;color:#707070;letter-spacing:-0.3px;-webkit-text-stroke:0;">17</span>
<div class="r" style="left:2px;top:585.0px;width:28px;height:1px;background:#ececec;"></div>
<span class="t" style="left:6.8px;top:614.5px;font-size:15px;line-height:18px;color:#707070;letter-spacing:-0.3px;-webkit-text-stroke:0;">18</span>
<div class="r" style="left:2px;top:610.0px;width:28px;height:1px;background:#ececec;"></div>
<span class="t" style="left:6.8px;top:639.7px;font-size:15px;line-height:18px;color:#707070;letter-spacing:-0.3px;-webkit-text-stroke:0;">19</span>
<div class="r" style="left:2px;top:635.0px;width:28px;height:1px;background:#ececec;"></div>
<span class="t" style="left:6.8px;top:664.8px;font-size:15px;line-height:18px;color:#707070;letter-spacing:-0.3px;-webkit-text-stroke:0;">20</span>
<div class="r" style="left:2px;top:660.0px;width:28px;height:1px;background:#ececec;"></div>
<div class="r" style="left:30px;top:218.5px;width:492px;height:40.5px;background:#153d65;"></div>
<span class="t" style="left:34.0px;top:230.0px;font-size:15.5px;line-height:19px;letter-spacing:0.17px;color:#f3e6c8;font-weight:bold;">Pays (ou territoire)</span>
<span class="t" style="left:251.5px;top:221.0px;font-size:15px;line-height:18px;letter-spacing:0.39px;color:#f3e6c8;font-weight:bold;">Population</span>
<span class="t" style="left:269.5px;top:240.5px;font-size:15px;line-height:18px;letter-spacing:0.84px;color:#f3e6c8;font-weight:bold;">(hab.)</span>
<span class="t" style="left:349.0px;top:221.0px;font-size:15px;line-height:18px;letter-spacing:-0.28px;color:#f3e6c8;font-weight:bold;">Superficie</span>
<span class="t" style="left:363.5px;top:240.5px;font-size:15px;line-height:18px;letter-spacing:1.08px;color:#f3e6c8;font-weight:bold;">(km²)</span>
<span class="t" style="left:448.0px;top:221.0px;font-size:15px;line-height:18px;letter-spacing:0.30px;color:#f3e6c8;font-weight:bold;">Densité</span>
<span class="t" style="left:436.5px;top:240.5px;font-size:15px;line-height:18px;letter-spacing:0.82px;color:#f3e6c8;font-weight:bold;">(hab./km²)</span>
<div class="r" style="left:30px;top:258.5px;width:492px;height:25.62px;background:#d8eeec;"></div>
<div class="r" style="left:30px;top:283.5px;width:492px;height:25.62px;background:#a5d3b5;"></div>
<div class="r" style="left:30px;top:308.5px;width:492px;height:25.62px;background:#d8eeec;"></div>
<div class="r" style="left:30px;top:333.5px;width:492px;height:25.62px;background:#a5d3b5;"></div>
<div class="r" style="left:30px;top:359.0px;width:492px;height:25.62px;background:#d8eeec;"></div>
<div class="r" style="left:30px;top:384.0px;width:492px;height:25.62px;background:#a5d3b5;"></div>
<div class="r" style="left:30px;top:409.0px;width:492px;height:25.62px;background:#d8eeec;"></div>
<div class="r" style="left:30px;top:434.0px;width:492px;height:25.62px;background:#a5d3b5;"></div>
<div class="r" style="left:30px;top:459.5px;width:492px;height:25.62px;background:#d8eeec;"></div>
<div class="r" style="left:30px;top:484.5px;width:492px;height:25.62px;background:#a5d3b5;"></div>
<div class="r" style="left:30px;top:509.5px;width:492px;height:25.62px;background:#d8eeec;"></div>
<div class="r" style="left:30px;top:534.5px;width:492px;height:25.62px;background:#a5d3b5;"></div>
<div class="r" style="left:30px;top:559.5px;width:492px;height:25.62px;background:#d8eeec;"></div>
<div class="r" style="left:30px;top:585.0px;width:492px;height:25.62px;background:#a5d3b5;"></div>
<div class="r" style="left:30px;top:610.0px;width:492px;height:25.62px;background:#d8eeec;"></div>
<div class="r" style="left:30px;top:635.0px;width:492px;height:25.62px;background:#a5d3b5;"></div>
<div class="r" style="left:30px;top:660.0px;width:492px;height:25.62px;background:#d8eeec;"></div>
<div class="r" style="left:30px;top:685.34px;width:492px;height:5px;background:#a5d3b5;"></div>
<div class="r" style="left:457px;top:647.5px;width:426px;height:31px;background:rgba(20,20,20,.58);"></div>
<span class="t c" style="left:34.0px;top:264.2px;font-size:14px;line-height:17px;color:#173f5a;">A</span>
<span class="t c" style="right:857.0px;top:264.7px;font-size:13.5px;line-height:16px;color:#173f5a;">82 431 390</span>
<span class="t c" style="right:765.0px;top:264.7px;font-size:13.5px;line-height:16px;color:#173f5a;">357 021</span>
<span class="t c" style="right:673.0px;top:264.7px;font-size:13.5px;line-height:16px;color:#173f5a;">230,89</span>
<span class="t c" style="right:857.0px;top:289.8px;font-size:13.5px;line-height:16px;color:#173f5a;">3 563 112</span>
<span class="t c" style="right:765.0px;top:289.8px;font-size:13.5px;line-height:16px;color:#173f5a;">28 748</span>
<span class="t c" style="right:673.0px;top:289.8px;font-size:13.5px;line-height:16px;color:#173f5a;">123,94</span>
<span class="t c" style="left:34.0px;top:314.4px;font-size:14px;line-height:17px;color:#173f5a;">Andorre</span>
<span class="t c" style="right:857.0px;top:314.9px;font-size:13.5px;line-height:16px;color:#173f5a;">70 549</span>
<span class="t c" style="left:34.0px;top:339.5px;font-size:14px;line-height:17px;color:#173f5a;">Autriche</span>
<span class="t c" style="right:857.0px;top:340.0px;font-size:13.5px;line-height:16px;color:#173f5a;">8 184 691</span>
<span class="t c" style="right:765.0px;top:340.0px;font-size:13.5px;line-height:16px;color:#173f5a;">83 870</span>
<span class="t c" style="right:673.0px;top:340.0px;font-size:13.5px;line-height:16px;color:#173f5a;">97,59</span>
<span class="t c" style="left:34.0px;top:364.6px;font-size:14px;line-height:17px;color:#173f5a;">Biélorussie</span>
<span class="t c" style="right:857.0px;top:365.1px;font-size:13.5px;line-height:16px;color:#173f5a;">10 300 483</span>
<span class="t c" style="right:765.0px;top:365.1px;font-size:13.5px;line-height:16px;color:#173f5a;">207 600</span>
<span class="t c" style="right:673.0px;top:365.1px;font-size:13.5px;line-height:16px;color:#173f5a;">49,62</span>
<span class="t c" style="left:34.0px;top:389.8px;font-size:14px;line-height:17px;color:#173f5a;">Belgique</span>
<span class="t c" style="right:857.0px;top:390.3px;font-size:13.5px;line-height:16px;color:#173f5a;">10 364 388</span>
<span class="t c" style="right:765.0px;top:390.3px;font-size:13.5px;line-height:16px;color:#173f5a;">30 528</span>
<span class="t c" style="right:673.0px;top:390.3px;font-size:13.5px;line-height:16px;color:#173f5a;">339,50</span>
<span class="t c" style="left:34.0px;top:414.9px;font-size:14px;line-height:17px;color:#173f5a;">Bosnie-Herzégovine</span>
<span class="t c" style="right:857.0px;top:415.4px;font-size:13.5px;line-height:16px;color:#173f5a;">4 025 476</span>
<span class="t c" style="right:765.0px;top:415.4px;font-size:13.5px;line-height:16px;color:#173f5a;">51 129</span>
<span class="t c" style="right:673.0px;top:415.4px;font-size:13.5px;line-height:16px;color:#173f5a;">78,73</span>
<span class="t c" style="left:35.5px;top:440.0px;font-size:14px;line-height:17px;color:#173f5a;">Bulgarie</span>
<span class="t c" style="right:857.0px;top:440.5px;font-size:13.5px;line-height:16px;color:#173f5a;">7 450 349</span>
<span class="t c" style="right:765.0px;top:440.5px;font-size:13.5px;line-height:16px;color:#173f5a;">110 910</span>
<span class="t c" style="right:673.0px;top:440.5px;font-size:13.5px;line-height:16px;color:#173f5a;">67,17</span>
<span class="t c" style="right:857.0px;top:465.6px;font-size:13.5px;line-height:16px;color:#173f5a;">780 133</span>
<span class="t c" style="right:765.0px;top:465.6px;font-size:13.5px;line-height:16px;color:#173f5a;">9 250</span>
<span class="t c" style="right:673.0px;top:465.6px;font-size:13.5px;line-height:16px;color:#173f5a;">84,34</span>
<span class="t c" style="left:34.0px;top:490.2px;font-size:14px;line-height:17px;color:#173f5a;">Croatie</span>
<span class="t c" style="right:857.0px;top:490.7px;font-size:13.5px;line-height:16px;color:#173f5a;">4 437 460</span>
<span class="t c" style="right:765.0px;top:490.7px;font-size:13.5px;line-height:16px;color:#173f5a;">56 542</span>
<span class="t c" style="right:673.0px;top:490.7px;font-size:13.5px;line-height:16px;color:#173f5a;">78,48</span>
<span class="t c" style="left:34.0px;top:515.4px;font-size:14px;line-height:17px;color:#173f5a;">Danemark</span>
<span class="t c" style="right:857.0px;top:515.9px;font-size:13.5px;line-height:16px;color:#173f5a;">5 535 672</span>
<span class="t c" style="right:765.0px;top:515.9px;font-size:13.5px;line-height:16px;color:#173f5a;">2 210 579</span>
<span class="t c" style="right:673.0px;top:515.9px;font-size:13.5px;line-height:16px;color:#173f5a;">2,50</span>
<span class="t c" style="left:34.0px;top:540.5px;font-size:14px;line-height:17px;color:#173f5a;">Espagne</span>
<span class="t c" style="right:857.0px;top:541.0px;font-size:13.5px;line-height:16px;color:#173f5a;">43 197 684</span>
<span class="t c" style="right:765.0px;top:541.0px;font-size:13.5px;line-height:16px;color:#173f5a;">504 782</span>
<span class="t c" style="right:673.0px;top:541.0px;font-size:13.5px;line-height:16px;color:#173f5a;">85,58</span>
<span class="t c" style="left:34.0px;top:565.6px;font-size:14px;line-height:17px;color:#173f5a;">Estonie</span>
<span class="t c" style="right:857.0px;top:566.1px;font-size:13.5px;line-height:16px;color:#173f5a;">1 332 893</span>
<span class="t c" style="right:765.0px;top:566.1px;font-size:13.5px;line-height:16px;color:#173f5a;">45 226</span>
<span class="t c" style="right:673.0px;top:566.1px;font-size:13.5px;line-height:16px;color:#173f5a;">29,47</span>
<span class="t c" style="left:34.0px;top:590.7px;font-size:14px;line-height:17px;color:#173f5a;">Finlande</span>
<span class="t c" style="right:857.0px;top:591.2px;font-size:13.5px;line-height:16px;color:#173f5a;">5 223 442</span>
<span class="t c" style="right:765.0px;top:591.2px;font-size:13.5px;line-height:16px;color:#173f5a;">338 145</span>
<span class="t c" style="right:673.0px;top:591.2px;font-size:13.5px;line-height:16px;color:#173f5a;">15,45</span>
<span class="t c" style="left:34.0px;top:615.8px;font-size:14px;line-height:17px;color:#173f5a;">France</span>
<span class="t c" style="right:857.0px;top:616.3px;font-size:13.5px;line-height:16px;color:#173f5a;">64 095 716</span>
<span class="t c" style="right:765.0px;top:616.3px;font-size:13.5px;line-height:16px;color:#173f5a;">667 544</span>
<span class="t c" style="right:673.0px;top:616.3px;font-size:13.5px;line-height:16px;color:#173f5a;">96,02</span>
<span class="t c" style="left:34.0px;top:641.0px;font-size:14px;line-height:17px;color:#173f5a;">Grèce</span>
<span class="t c" style="right:857.0px;top:641.5px;font-size:13.5px;line-height:16px;color:#173f5a;">10 668 354</span>
<span class="t c" style="right:765.0px;top:641.5px;font-size:13.5px;line-height:16px;color:#173f5a;">131 940</span>
<span class="t c" style="right:673.0px;top:641.5px;font-size:13.5px;line-height:16px;color:#173f5a;">80,86</span>
<span class="t c" style="left:34.0px;top:666.1px;font-size:14px;line-height:17px;color:#173f5a;">Hongrie</span>
<span class="t c" style="right:857.0px;top:666.6px;font-size:13.5px;line-height:16px;color:#173f5a;">10 006 835</span>
<span class="t c" style="right:765.0px;top:666.6px;font-size:13.5px;line-height:16px;color:#173f5a;">93 030</span>
<span class="t c" style="right:673.0px;top:666.6px;font-size:13.5px;line-height:16px;color:#173f5a;">107,57</span>
<div class="r" style="left:29.5px;top:257.8px;width:217.5px;height:27.12px;background:transparent;border:2px solid #21734a;box-shadow:inset 0 0 0 1px rgba(255,255,255,.75);"></div>
<div class="r" style="left:243.5px;top:280.92px;width:5px;height:5px;background:#21734a;border-top:1px solid #d8eeec;border-left:1px solid #d8eeec;"></div>
<div class="r" style="left:44.6px;top:263.3px;width:1.2px;height:17px;background:#222;"></div>
<svg class="r" style="left:136px;top:265px;" width="9" height="19" viewBox="0 0 9 19"><path d="M1 1C3 1 4 1.5 4.5 2.5C5 1.5 6 1 8 1M1 18C3 18 4 17.5 4.5 16.5C5 17.5 6 18 8 18M4.5 2.5V16.5M3 9.5H6" fill="none" stroke="#555" stroke-width="1.3"/></svg>
<div class="r" style="left:0px;top:1px;width:2px;height:690px;background:linear-gradient(90deg,#8b8f8c,#bfc2c0);"></div>
<div class="r" style="left:1184px;top:1px;width:7px;height:690px;background:linear-gradient(90deg,rgba(120,120,120,0),rgba(120,120,120,.16) 45%,rgba(110,110,110,.72));"></div>
<span class="t" style="left:463.0px;top:655.7px;font-size:14.5px;line-height:17px;letter-spacing:0.39px;color:#f0f0f0;">Dès le premier caractère saisi, la barre de formule est active.</span>

</div>
<div id="controls">
<div class="r" style="left:26.3px;top:10.399999999999977px;width:44px;height:44px;background:#1b1b1b;border-radius:50%;"></div>
<svg class="r" style="left:43px;top:23px" width="17" height="19" viewBox="0 0 17 19"><path d="M0 0L17 9.5L0 19Z" fill="#fff"/></svg>
<div class="r" style="left:97px;top:29.5px;width:843px;height:11px;background:linear-gradient(180deg,#000 0%,#0a0a0a 55%,#2a2a2a 100%);border-radius:1px;"></div>
<div class="r" style="left:97.5px;top:29.5px;width:72px;height:11px;background:linear-gradient(180deg,#5c5c5c 0%,#9a9a9a 45%,#b4b4b4 100%);border-radius:1px;"></div>
<div class="r" style="left:167.5px;top:24.5px;width:10.5px;height:21.5px;background:#fff;border-radius:2px;"></div>
<span class="t" style="left:958.5px;top:27.0px;font-size:12.5px;font-weight:bold;line-height:15px;color:#d6d6d6;word-spacing:4.3px">0:17 / 3:13</span>
<div class="r" style="left:1078.8px;top:10.399999999999977px;width:44px;height:44px;background:#1b1b1b;border-radius:50%;"></div>
<svg class="r" style="left:1088px;top:22.299999999999955px" width="28" height="20" viewBox="0 0 28 20"><path d="M0 6H5.5L15.6 0V20L5.5 14H0Z" fill="#fff"/><path d="M18.2 6.2C20.4 8.2 20.4 11.8 18.2 13.8" fill="none" stroke="#fff" stroke-width="2"/><path d="M22 3C26.6 6.6 26.6 13.4 22 17" fill="none" stroke="#e4e4e4" stroke-width="2.2"/></svg>
<div class="r" style="left:1141.8px;top:10.399999999999977px;width:44px;height:44px;background:#1b1b1b;border-radius:50%;"></div>
<div class="r" style="left:1151.3px;top:24.799999999999955px;width:26.3px;height:14.2px;background:#fff;border-radius:1px;"></div>
<div class="r" style="left:1155px;top:30.399999999999977px;width:18.5px;height:1.6px;background:#333;"></div>
<div class="r" style="left:1158px;top:33.299999999999955px;width:12.5px;height:1.4px;background:#9a9a9a;"></div>

</div>
</div>
</body>
</html>
